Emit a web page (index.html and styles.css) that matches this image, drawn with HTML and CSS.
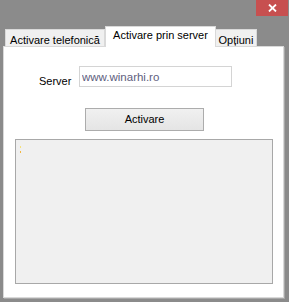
FILE: index.html
```html
<!DOCTYPE html>
<html lang="ro">
<head>
<meta charset="utf-8">
<title>Activare</title>
<link rel="stylesheet" href="styles.css">
</head>
<body>
<div class="window">
  <div class="titlebar">
    <button class="close" aria-label="Închide">
      <svg width="9" height="8" viewBox="0 0 9 8"><path d="M1 0.5 L8 7.5 M8 0.5 L1 7.5" stroke="#fff" stroke-width="1.8" fill="none"/></svg>
    </button>
  </div>
  <div class="tabs">
    <div class="tab t1">Activare telefonică</div>
    <div class="tab active t2">Activare prin server</div>
    <div class="tab t3">Opțiuni</div>
  </div>
  <div class="panel">
    <div class="row">
      <label class="lbl" for="srv">Server</label>
      <input class="field" id="srv" type="text" value="www.winarhi.ro">
    </div>
    <button class="btn">Activare</button>
    <div class="log"><span class="dots"></span></div>
  </div>
</div>
</body>
</html>
```
FILE: styles.css
```css
* { box-sizing: border-box; }
html, body { margin: 0; padding: 0; }
body { background: #8b8b8b; font-family: "Liberation Sans", Arial, sans-serif; font-size: 11px; line-height: 13px; color: #000; }
.window { width: 289px; height: 302px; background: #8b8b8b; display: flex; flex-direction: column; }
.titlebar { height: 26px; display: flex; justify-content: flex-end; align-items: flex-start; }
.close { width: 32px; height: 16px; margin-right: 1px; padding: 0; border: 0; background: #c75050; display: flex; align-items: center; justify-content: center; }
.close svg { display: block; margin-top: -1px; }
.tabs { height: 20px; display: flex; align-items: flex-end; padding-left: 5px; }
.tab { height: 17px; background: #f0f0f0; border: 1px solid #d9d9d9; border-bottom: 0; padding-top: 4px; text-align: center; white-space: nowrap; font: inherit; }
.t1 { width: 100px; }
.t2 { width: 111px; }
.t3 { width: 42px; margin-left: -1px; }
.tab.active { background: #fff; height: 21px; margin-bottom: -1px; margin-left: -0px; padding-top: 2px; position: relative; z-index: 1; }
.panel { margin: 0 5px 4px 3px; flex: 1; background: #fff; border: 1px solid #d9d9d9; box-shadow: 1px 1px 0 #a8a8a8; padding: 19px 11px 0 11px; display: flex; flex-direction: column; align-items: flex-start; }
.row { display: flex; align-items: flex-start; padding-left: 24px; }
.lbl { width: 40px; padding-top: 9px; }
.field { width: 153px; height: 21px; border: 1px solid #d4d4d4; padding: 3px 2px; font: inherit; font-size: 11.5px; color: #5e5e7e; background: #fff; outline: none; margin: 0; }
.btn { margin: 20px 0 0 70px; width: 119px; height: 23px; border: 1px solid #acacac; background: linear-gradient(#f0f0f0, #e5e5e5); font: inherit; color: #000; padding: 0; }
.log { margin-top: 8px; width: 258px; height: 145px; border: 1px solid #a8a8a8; background: #f0f0f0; padding: 6px 0 0 4px; }
.dots { display: block; width: 1px; height: 2px; background: #f5e27a; box-shadow: 0 5px 0 #f3b640; }
```
